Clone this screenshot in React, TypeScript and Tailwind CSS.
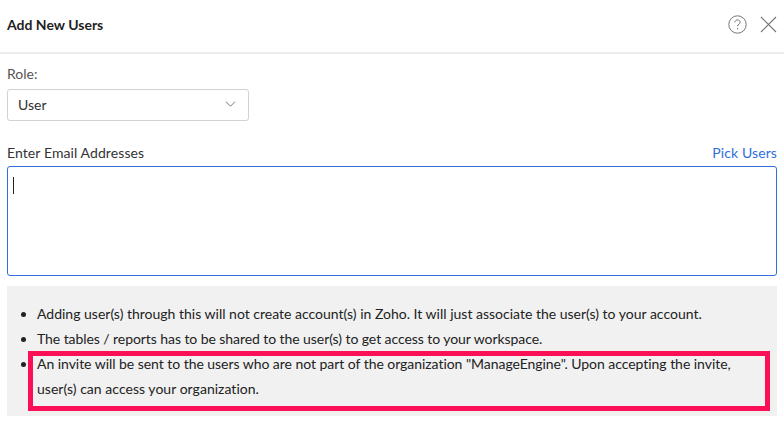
import React from 'react';

const App = () => {
    return (
        <div className="relative h-[428px] w-[784px] overflow-hidden bg-white font-['Lato','Noto_Sans',sans-serif] text-[14px] text-[#222]">
            <header className="flex h-[54px] items-center justify-between border-b-2 border-[#ececec] pl-[7px] pr-[7px] pb-[4px]">
                <h1 className="text-[14px] font-bold text-[#1f1f1f]">Add New Users</h1>
                <div className="flex items-center gap-[13px]">
                    <svg width="19" height="19" viewBox="0 0 19 19" fill="none" stroke="#77737a" strokeWidth="1">
                        <circle cx="9.5" cy="9.5" r="8.7" />
                        <path d="M6.9 7.4c0-1.5 1.2-2.5 2.7-2.5s2.6 1 2.6 2.3c0 1.9-2.6 2-2.6 4" />
                        <path d="M9.6 13v1.4" />
                    </svg>
                    <svg width="17" height="17" viewBox="0 0 17 17" fill="none" stroke="#77737a" strokeWidth="1.1">
                        <path d="M1 1l15 15M16 1L1 16" />
                    </svg>
                </div>
            </header>

            <div className="px-[7px]">
                <label className="mt-[11px] block text-[14px] leading-[17px] text-[#555]">Role:</label>
                <div className="mt-[7px] flex h-[32px] w-[242px] items-center justify-between rounded-[3px] border border-[#d2d2d2] pb-[2px] pl-[10px] pr-[12px]">
                    <span className="text-[14px] text-[#333]">User</span>
                    <svg width="11" height="6" viewBox="0 0 11 6" fill="none" stroke="#777" strokeWidth="1">
                        <path d="M1 .7l4.5 4.5L10 .7" />
                    </svg>
                </div>

                <div className="mt-[22px] flex h-[18px] items-center justify-between">
                    <span className="text-[14px] tracking-[0.09px] text-[#333]">Enter Email Addresses</span>
                    <a className="text-[14px] tracking-[0.1px] text-[#2f6fdb]">Pick Users</a>
                </div>
                <div className="mt-[5px] h-[110px] rounded-[3px] border border-[#2f6fdb] pl-[5px] pt-[10px]">
                    <div className="h-[17px] w-px bg-[#222]" />
                </div>

                <ul className="mt-[10px] h-[130px] list-disc bg-[#f1f1f1] pl-[30px] pr-[40px] pt-[15px] text-[14px] leading-[25px] text-[#222]">
                    <li>Adding user(s) through this will not create account(s) in Zoho. It will just associate the user(s) to your account.</li>
                    <li className="tracking-[-0.07px]">The tables / reports has to be shared to the user(s) to get access to your workspace.</li>
                    <li>
                        <span className="tracking-[-0.043px]">An invite will be sent to the users who are not part of the organization "ManageEngine". Upon accepting the invite,</span>{' '}
                        <span className="tracking-[0.03px]">user(s) can access your organization.</span>
                    </li>
                </ul>
            </div>

            {/* annotation drawn over the screenshot */}
            <div className="absolute left-[28px] top-[351px] h-[60px] w-[742px] border-[5px] border-[#fb0f56]" />
        </div>
    );
};

export default App;
